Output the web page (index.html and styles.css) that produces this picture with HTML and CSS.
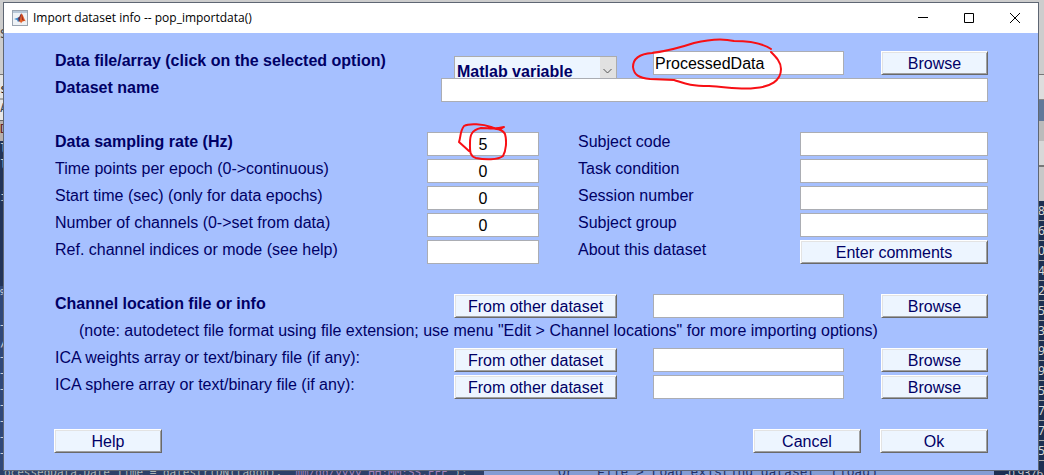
FILE: index.html
```html
<!DOCTYPE html>
<html lang="en">
<head>
<meta charset="utf-8">
<title>Import dataset info -- pop_importdata()</title>
<link rel="stylesheet" href="styles.css">
</head>
<body>
<div class="backdrop" aria-hidden="true">
  <div class="behind-left">
    <div class="chrome"><span>S</span></div>
    <div class="toolbar">s</div>
    <div class="path">A</div>
    <div class="tab">D</div>
    <div class="editor"><span>l</span><span>l</span><span></span><span>i</span></div>
    <div class="ticks"><i>%</i><i></i><i>¬</i><i>/</i><i>¬</i><i>¬</i><i>¬</i><i>¬</i><i>¬</i><i>¬</i><i>¬</i></div>
  </div>
  <div class="behind-right">
    <div class="chrome"></div>
    <div class="bar"></div>
    <div class="tabs"></div>
    <div class="strip"></div>
    <div class="heads"></div>
    <div class="numbers"><b>8</b><b>6</b><b>0</b><b>4</b><b>2</b><b>5</b><b>3</b><b>9</b><b>9</b><b>5</b><b>7</b><b>7</b><b>5</b></div>
  </div>
  <div class="behind-bottom">
    <div class="code">ocessedData.Date Time = datestr(DN(tagon), <em>'mm/dd/yyyy HH:MM:SS.FFF'</em>);</div>
    <div class="console">Or  "File &gt; Load existing dataset" (load)</div>
    <div class="cells">-0.9376</div>
  </div>
</div>

<main class="window">
  <header class="titlebar">
    <svg class="logo" viewBox="0 0 16 16" aria-hidden="true">
      <rect x=".5" y=".5" width="15" height="15" fill="#eef2f6" stroke="#9aa4b0"/>
      <path d="M1 1h14v2H1z" fill="#b8c8d8"/>
      <path d="M2 9l3-1 2-1 2 2-3 3-1-2z" fill="#3a86c8"/>
      <path d="M6 8c2-1 2-4 3.400-4.500L8.500 10 7 12z" fill="#6b3040"/>
      <path d="M9.400 3.500C11 4 12 9 14 11.500 12 10.500 10.500 11 9 13.500 8.700 12 8 11.500 7 12c1.500-2 1.500-6 2.400-8.500z" fill="#e2622b"/>
      <path d="M9.400 3.500c1 1 1.400 5 2.800 7.300L10 10z" fill="#a82c1c"/>
    </svg>
    <h1>Import dataset info -- pop_importdata()</h1>
    <div class="controls">
      <button type="button" aria-label="Minimize"><svg viewBox="0 0 12 12"><path d="M1 5.500h10"/></svg></button>
      <button type="button" aria-label="Maximize"><svg viewBox="0 0 12 12"><path d="M1.500 1.500h9v9h-9z"/></svg></button>
      <button type="button" aria-label="Close"><svg viewBox="0 0 12 12"><path d="M1 1l10 10M11 1L1 11"/></svg></button>
    </div>
  </header>

  <form class="form">
    <div class="row source">
      <label class="strong" for="kind">Data file/array (click on the selected option)</label>
      <span class="dropdown">
        <select id="kind"><option>Matlab variable</option></select>
        <svg viewBox="0 0 16 28" aria-hidden="true"><path d="M0 0h16v28H0z" fill="#e1e1e1"/><path d="M3.500 12l4 4 4-4" fill="none" stroke="#555"/></svg>
      </span>
      <span class="marked">
        <input id="data" type="text" value="ProcessedData" aria-label="Data variable">
        <svg class="ring-wide" viewBox="0 0 156 56" aria-hidden="true"><path d="M141 12Q129 4 104 4C92 1 76 3 64 6C49 11 38 14 22 16C9 17 3 22 3 30C4 38 9 41 20 42L44 43C54 46 59 49 79 49C98 50 111 53 125 51C140 50 151 44 151 32C151 25 146 20 141 15"/></svg>
      </span>
      <button type="button">Browse</button>
    </div>
    <div class="row name">
      <label class="strong" for="name">Dataset name</label>
      <input id="name" type="text">
    </div>
    <div class="row"></div>
    <div class="row pair">
      <label class="strong" for="rate">Data sampling rate (Hz)</label>
      <span class="marked">
        <input id="rate" class="num" type="text" value="5">
        <svg class="ring-small" viewBox="0 0 52 40" aria-hidden="true"><path d="M14 30L4 21C6 15 5 10 9 5C14 2 28 3 36 6C42 9 45 9 49 6C40 9 34 7 26 7C16 9 15 15 15 22C15 29 14 35 21 37C30 39 43 39 48 35C51 30 52 20 50 13C49 11 46 9 43 8"/></svg>
      </span>
      <label for="subject">Subject code</label>
      <input id="subject" type="text">
    </div>
    <div class="row pair">
      <label for="points">Time points per epoch (0-&gt;continuous)</label>
      <input id="points" class="num" type="text" value="0">
      <label for="task">Task condition</label>
      <input id="task" type="text">
    </div>
    <div class="row pair">
      <label for="start">Start time (sec) (only for data epochs)</label>
      <input id="start" class="num" type="text" value="0">
      <label for="session">Session number</label>
      <input id="session" type="text">
    </div>
    <div class="row pair">
      <label for="channels">Number of channels (0-&gt;set from data)</label>
      <input id="channels" class="num" type="text" value="0">
      <label for="group">Subject group</label>
      <input id="group" type="text">
    </div>
    <div class="row pair">
      <label for="ref">Ref. channel indices or mode (see help)</label>
      <input id="ref" class="num" type="text">
      <label for="comments">About this dataset</label>
      <button id="comments" type="button">Enter comments</button>
    </div>
    <div class="row"></div>
    <div class="row source">
      <label class="strong" for="locs">Channel location file or info</label>
      <button type="button">From other dataset</button>
      <input id="locs" type="text">
      <button type="button">Browse</button>
    </div>
    <p class="row note">(note: autodetect file format using file extension; use menu "Edit &gt; Channel locations" for more importing options)</p>
    <div class="row source">
      <label for="weights">ICA weights array or text/binary file (if any):</label>
      <button type="button">From other dataset</button>
      <input id="weights" type="text">
      <button type="button">Browse</button>
    </div>
    <div class="row source">
      <label for="sphere">ICA sphere array or text/binary file (if any):</label>
      <button type="button">From other dataset</button>
      <input id="sphere" type="text">
      <button type="button">Browse</button>
    </div>
    <div class="row"></div>
    <div class="row actions">
      <button type="button">Help</button>
      <button class="cancel" type="button">Cancel</button>
      <button type="submit">Ok</button>
    </div>
  </form>
</main>
</body>
</html>
```

FILE: styles.css
```css
* { box-sizing: border-box; }

body {
  margin: 0;
  min-height: 100vh;
  position: relative;
  overflow: hidden;
  display: flex;
  flex-direction: column;
  padding: 2px 5px 4px 3px;
  background: #cdcdcd;
  font: 16px/20px "Liberation Sans", Arial, sans-serif;
  color: #000066;
}

/* Applications visible around the dialog's edges */
.backdrop { position: absolute; inset: 0; overflow: hidden; font: 12px/16px "DejaVu Sans Mono", monospace; }
.behind-left { position: absolute; left: 0; top: 0; width: 12px; }
.behind-left .chrome { height: 75px; padding-top: 26px; border-bottom: 1px solid #777; color: #444; }
.behind-left .toolbar { height: 25px; padding-top: 6px; background: #e4e4e4; border-bottom: 2px solid #aaa; color: #111; }
.behind-left .path { height: 20px; background: #e8e8e8; color: #345; }
.behind-left .tab { height: 21px; border-top: 1px solid #666; background: #b8b0ae; color: #622; }
.behind-left .editor { height: 145px; background: #223458; color: #ccc; }
.behind-left .editor span { display: block; height: 16px; }
.behind-left .ticks { height: 190px; background: #304878; color: #c8ccd8; }
.behind-left .ticks i { display: block; height: 16px; font-style: normal; }
.behind-right { position: absolute; right: 0; top: 0; bottom: 0; width: 6px; background: #1c2f52; }
.behind-right .chrome { height: 75px; background: #cdcdcd; border-bottom: 1px solid #777; }
.behind-right .bar { height: 25px; background: #ddd; border-bottom: 1px solid #888; }
.behind-right .tabs { height: 21px; background: #61789a; }
.behind-right .strip { height: 46px; background: #d8d8d8; border-top: 20px solid #bbb; border-bottom: 2px solid #777; }
.behind-right .heads { height: 34px; background: #c8c8c8; }
.behind-right .numbers { color: #d8d8d8; font: 12px/19px "Noto Sans", sans-serif; }
.behind-right .numbers b { display: block; height: 20px; border-bottom: 1px solid #aaa; font-weight: 400; }
.behind-bottom {
  position: absolute; left: 0; right: 0; bottom: 0; height: 5px;
  display: grid; grid-template-columns: 484fr 510fr 50fr;
  white-space: pre;
}
.behind-bottom > div { overflow: hidden; }
.code { padding-left: 4px; background: #2c4068; color: #aab4b4; font-size: 11px; line-height: 5px; }
.code em { color: #a080b8; font-style: normal; }
.console { padding-left: 74px; background: #839cd4; color: #203068; font: 13px/5px "Liberation Mono", monospace; }
.cells { padding-left: 11px; background: #1c2f52; color: #ccc; font: 11px/5px "Noto Sans", sans-serif; }

.window {
  flex: 1;
  position: relative;
  display: flex;
  flex-direction: column;
  border: 1px solid #5e6673;
  background: #a6c0ff;
}

.titlebar { display: flex; align-items: center; height: 30px; padding-left: 8px; background: #fff; color: #000; }
.logo { width: 16px; height: 16px; }
.titlebar h1 { margin: 0 0 0 5px; flex: 1; font: 12px/16px "Open Sans", "Noto Sans", sans-serif; }
.controls { display: flex; }
.controls button {
  width: 46px; height: 30px; padding: 0; border: 0; background: none;
  display: grid; place-items: center;
}
.controls svg { width: 12px; height: 12px; fill: none; stroke: #000; }

.form { display: flex; flex-direction: column; gap: 3px; padding: 18px 50px 17px; }
.row { display: grid; height: 24px; margin: 0; }
.source { grid-template-columns: 400fr 163fr 36fr 191fr 37fr 107fr; }
.source > :nth-child(3) { grid-column: 4; }
.source > :nth-child(4) { grid-column: 6; }
.name { grid-template-columns: 387fr 547fr; position: relative; }
.pair { grid-template-columns: 373fr 112fr 38fr 223fr 188fr; }
.pair > :nth-child(3) { grid-column: 4; }
.pair > :nth-child(4) { grid-column: 5; }
.note { padding-left: 25px; white-space: nowrap; }
.actions { grid-template-columns: 108fr 591fr 108fr 19fr 108fr; }
.actions .cancel { grid-column: 3; }
.actions > :last-child { grid-column: 5; }

label { padding-left: 1px; white-space: nowrap; }
.strong { font-weight: 700; }

input, .form button, select { min-width: 0; width: 100%; height: 24px; font: inherit; border-radius: 0; }
input { padding: 2px 1px 0; border: 1px solid #abadb3; background: #fff; color: #000; }
.num { text-align: center; }
.form button {
  padding: 2px 0 0;
  border: 1px solid;
  border-color: #fff #696969 #696969 #fff;
  background: #edf5ff;
  color: #000066;
  box-shadow: inset 1px 1px #e3e3e3, inset -1px -1px #a0a0a0;
}

.dropdown { position: relative; height: 30px; margin-top: 5px; }
select {
  appearance: none; height: 30px; padding: 1px 2px 0;
  border: 1px solid #acacac; background: #edf5ff; color: #000066; font-weight: 700;
}
.dropdown svg { position: absolute; right: 1px; top: 1px; width: 16px; height: 28px; pointer-events: none; }

/* Hand-drawn highlights over the filled-in fields */
.marked { position: relative; z-index: 1; display: block; }
.marked svg { position: absolute; fill: none; stroke: #f80f14; stroke-width: 2; stroke-linecap: round; stroke-linejoin: round; pointer-events: none; }
.ring-wide { left: -23px; top: -14px; width: 156px; height: 56px; }
.ring-small { left: 28px; top: -11px; width: 52px; height: 40px; }
```
